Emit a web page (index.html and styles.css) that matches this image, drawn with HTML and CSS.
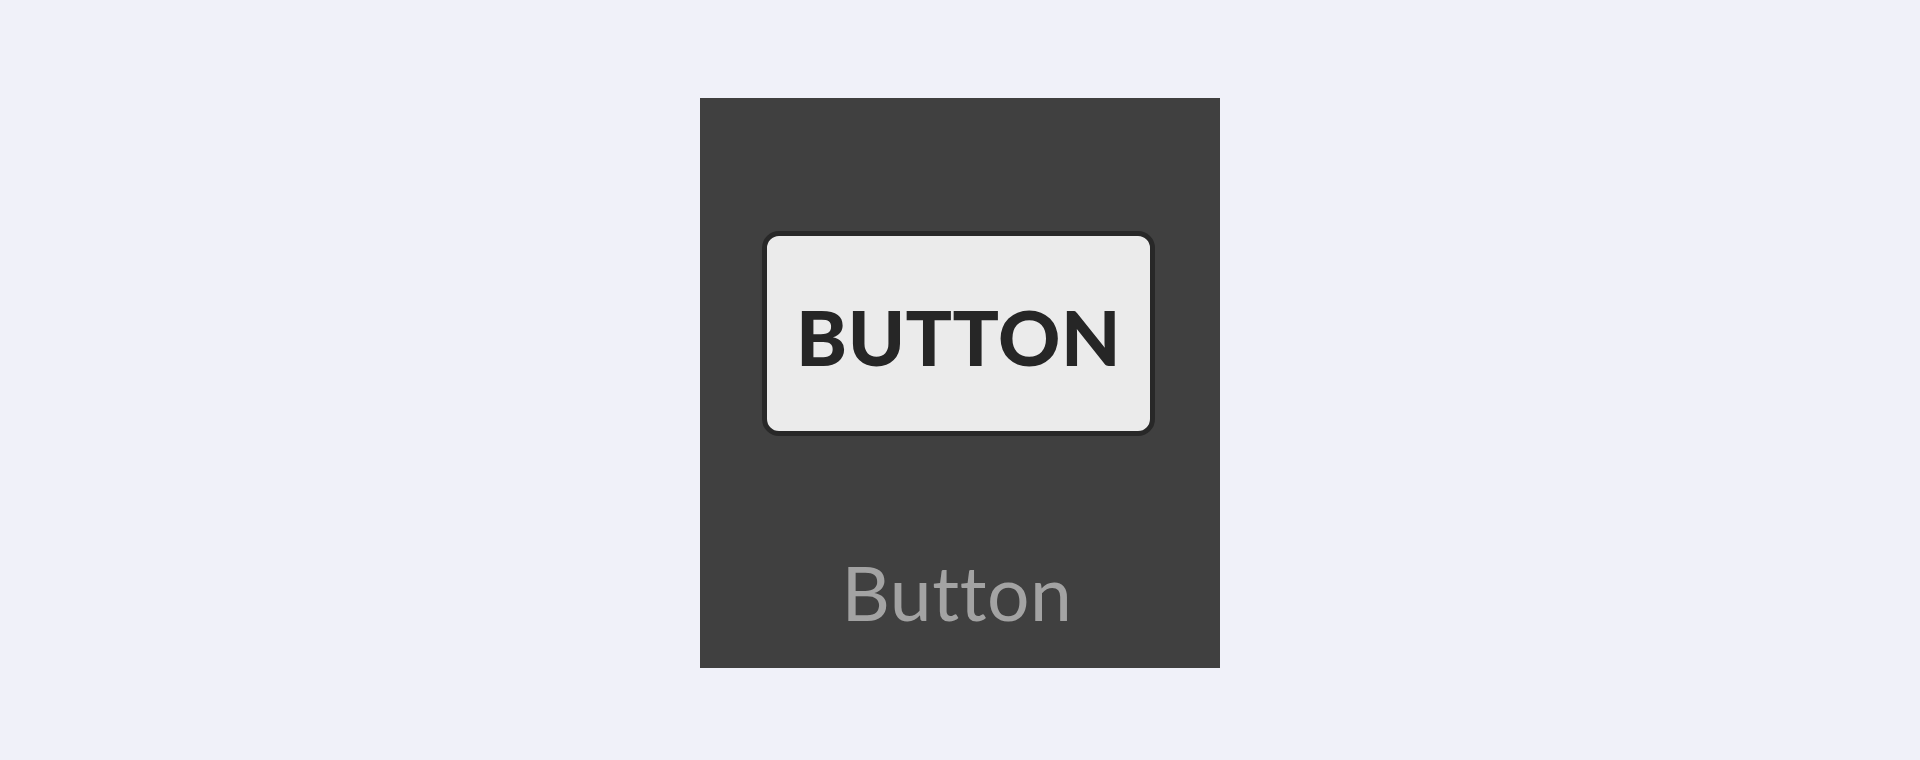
FILE: index.html
```html
<!DOCTYPE html>
<html lang="en">
<head>
	<meta charset="UTF-8">
	<title>Button</title>
	<link rel="stylesheet" href="styles.css">
</head>
<body>
	<div class="tile">
		<div class="btn-preview">
			<span class="btn-text">BUTTON</span>
		</div>
		<div class="tile-label">Button</div>
	</div>
</body>
</html>
```

FILE: styles.css
```css
		body {
			margin: 0;
			padding-top: 98px;
			background-color: #f0f1f9;
			font-family: "Lato", "Open Sans", sans-serif;
		}

		.tile {
			width: 520px;
			height: 570px;
			margin: 0 auto;
			box-sizing: border-box;
			background-color: #404040;
			display: flex;
			flex-direction: column;
			align-items: center;
			padding-top: 133px;
		}

		.btn-preview {
			width: 393px;
			height: 205px;
			box-sizing: border-box;
			margin-right: 3px;
			border: 5px solid #282828;
			border-radius: 17px;
			background-color: #ebebeb;
			display: flex;
			align-items: center;
			justify-content: center;
			padding-top: 5px;
		}

		.btn-text {
			font-size: 77px;
			line-height: 1;
			font-weight: 900;
			color: #262626;
			letter-spacing: 0.5px;
		}

		.tile-label {
			margin-top: 119px;
			margin-right: 6px;
			font-size: 75px;
			line-height: 1;
			letter-spacing: 0.6px;
			color: #a3a3a3;
		}
```
